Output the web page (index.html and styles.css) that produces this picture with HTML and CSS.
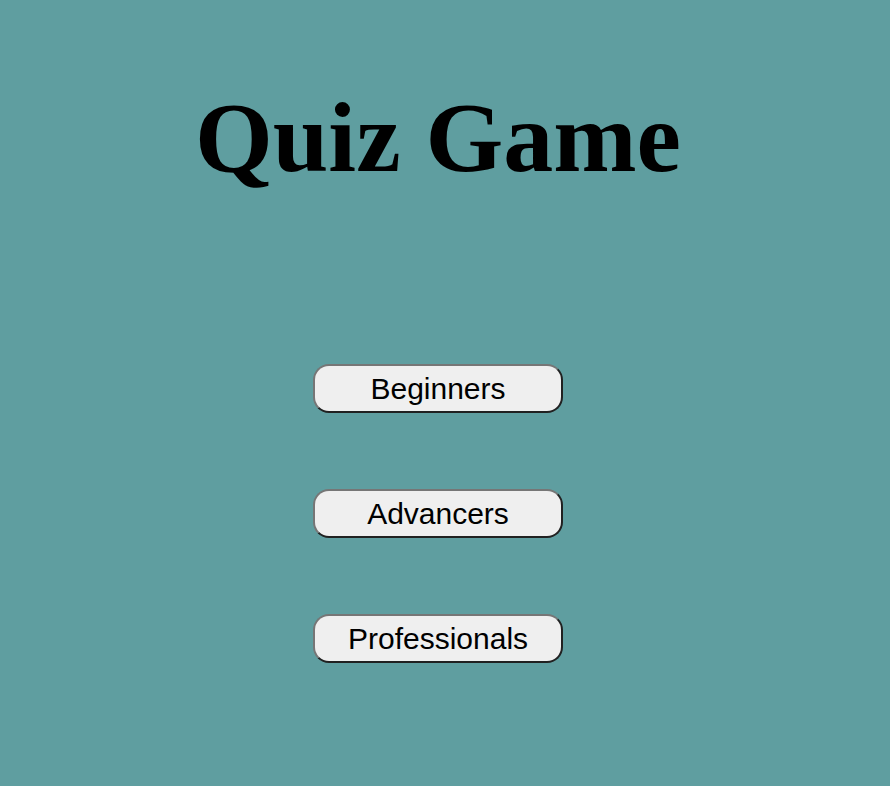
FILE: index.html
```html
<!DOCTYPE html>
<html lang="en">
<head>
<meta charset="utf-8">
<title>Quiz Game</title>
<link rel="stylesheet" href="styles.css">
</head>
<body>
<main class="page">
  <h1 class="title">Quiz Game</h1>
  <nav class="levels">
    <button class="level-btn" type="button">Beginners</button>
    <button class="level-btn" type="button">Advancers</button>
    <button class="level-btn" type="button">Professionals</button>
  </nav>
</main>
</body>
</html>
```

FILE: styles.css
```css
html, body {
  margin: 0;
  padding: 0;
  background: #5f9ea0;
}

.page {
  width: 876px;
  display: flex;
  flex-direction: column;
  align-items: center;
}

.title {
  margin: 0;
  padding-top: 83px;
  font-family: "Liberation Serif", serif;
  font-weight: bold;
  font-size: 100px;
  line-height: 110px;
  color: #000;
}

.levels {
  margin-top: 171px;
  display: flex;
  flex-direction: column;
  align-items: center;
  gap: 76px;
}

.level-btn {
  width: 250px;
  height: 49px;
  box-sizing: border-box;
  border: 2px outset #767676;
  border-radius: 16px;
  background: #efefef;
  font-family: "Liberation Sans", Arial, sans-serif;
  font-size: 30px;
  color: #000;
  padding: 0;
}
```
